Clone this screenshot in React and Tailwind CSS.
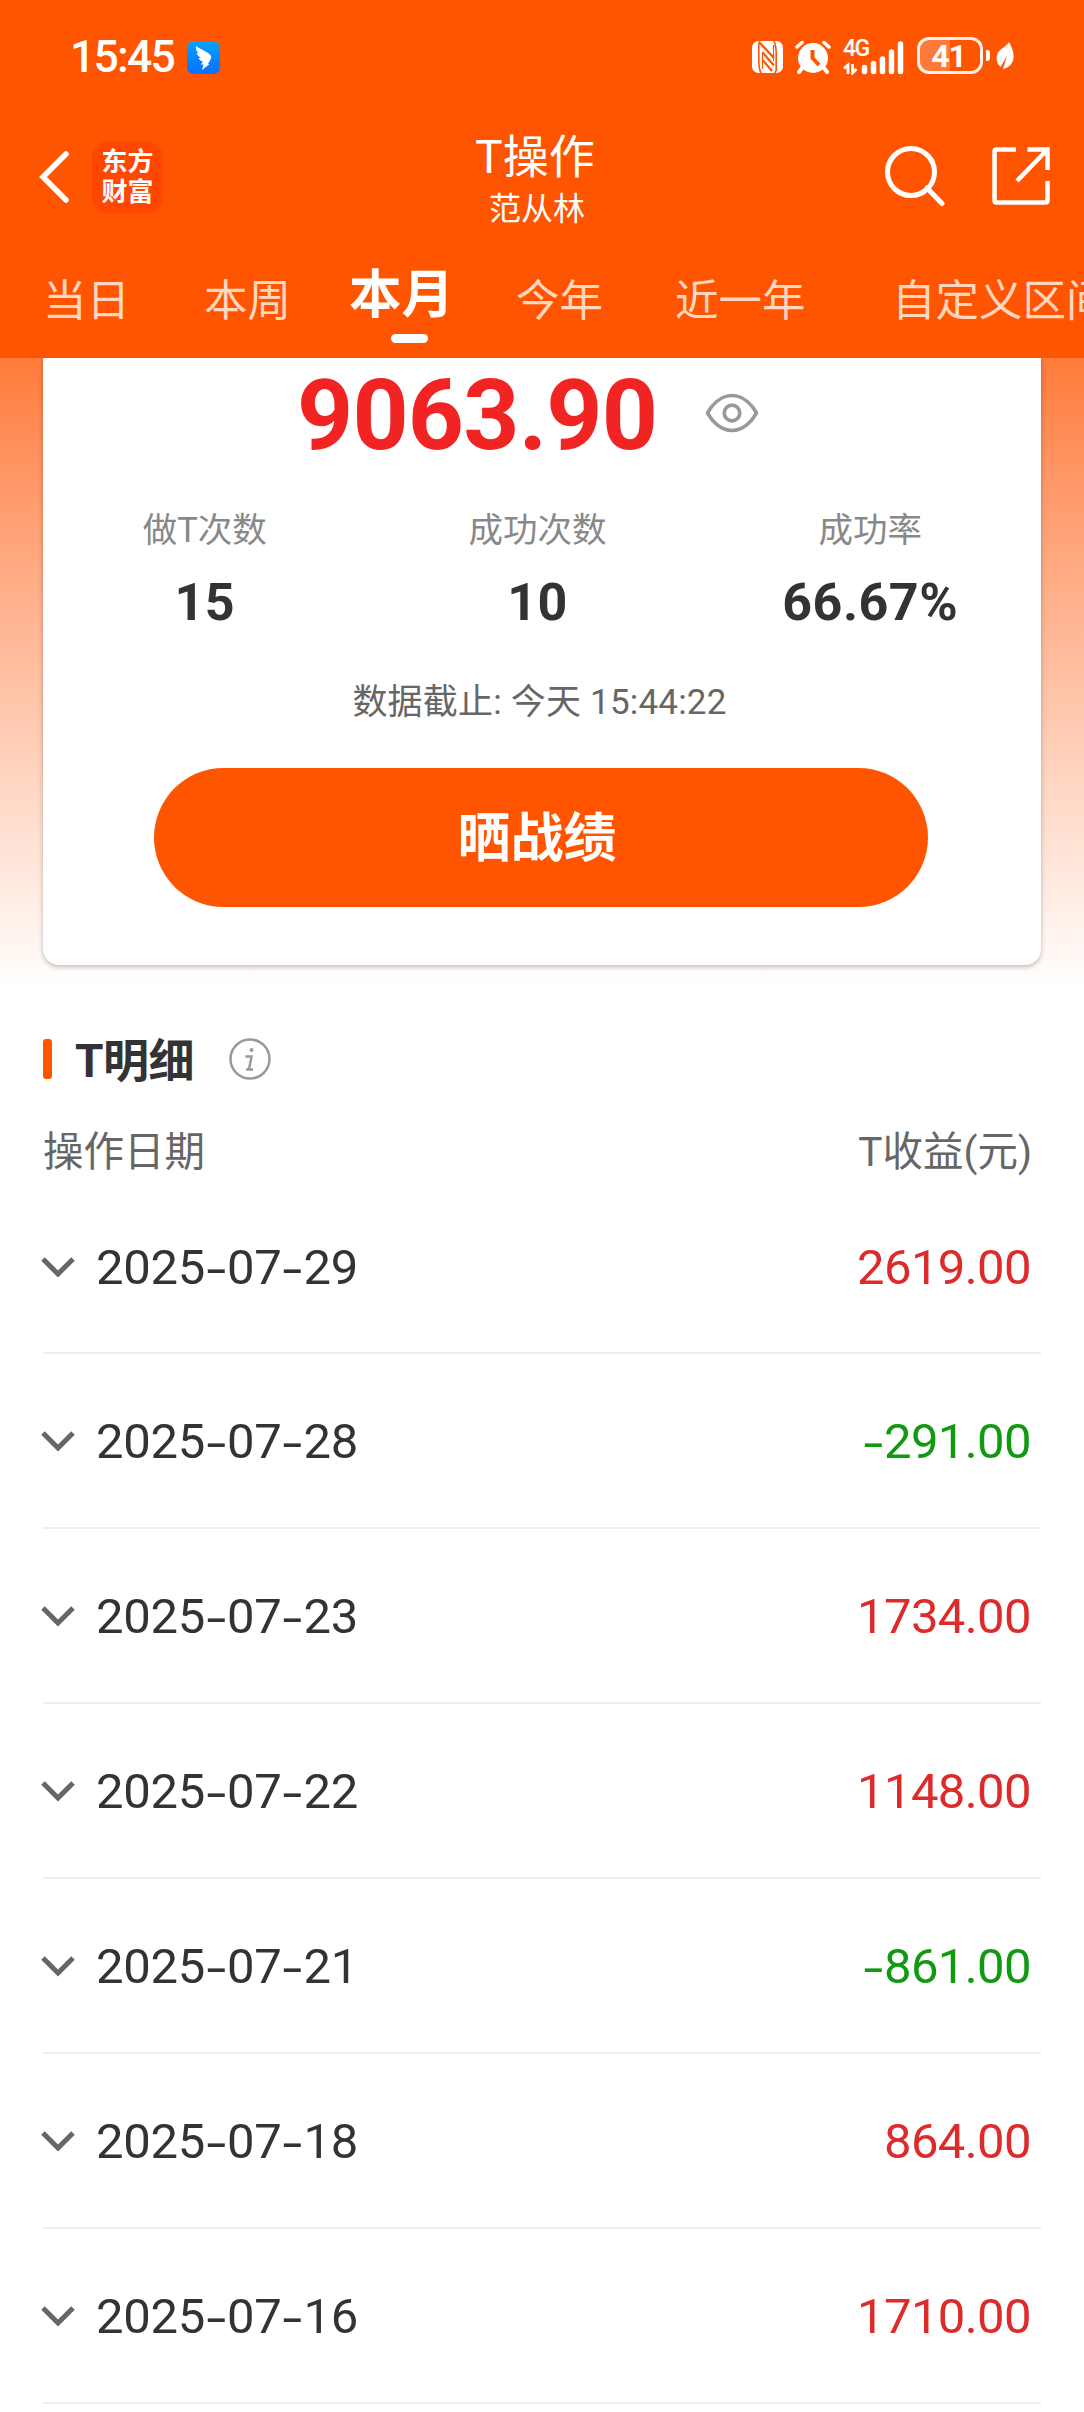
import { clsx } from 'clsx'

const tabs = [
  { label: '当日', width: 'w-[161px]' },
  { label: '本周', width: 'w-[145px]' },
  { label: '本月', width: 'w-[167px]', active: true },
  { label: '今年', width: 'w-[159px]' },
  { label: '近一年', width: 'w-[217px]' },
  { label: '自定义区间', width: 'w-[220px]' }
]

const stats = [
  { label: '做T次数', value: '15' },
  { label: '成功次数', value: '10' },
  { label: '成功率', value: '66.67%' }
]

const records = [
  { date: '2025-07-29', profit: '2619.00' },
  { date: '2025-07-28', profit: '-291.00' },
  { date: '2025-07-23', profit: '1734.00' },
  { date: '2025-07-22', profit: '1148.00' },
  { date: '2025-07-21', profit: '-861.00' },
  { date: '2025-07-18', profit: '864.00' },
  { date: '2025-07-16', profit: '1710.00' }
]

// Digits with wide dashes
function Digits({ text }) {
  return text.split(/(-)/).map((part, i) =>
    part === '-' ? (
      <span key={i} className="inline-block w-[22px] translate-y-[2px] scale-x-[1.45] text-center">-</span>
    ) : (
      <span key={i}>{part}</span>
    )
  )
}

function NfcIcon() {
  return (
    <svg className="w-[31px] h-[32px]" viewBox="0 0 31 32" fill="none">
      <rect width="31" height="32" rx="6.500" fill="#fff" />
      <path d="M9 32C6.500 28 6.800 20 6.800 16V3L8 0M22 0C24.500 5 24.200 12 24.200 16V29L23 32" stroke="#ff5500" strokeWidth="1.600" />
      <path d="M8 2L22 17M10.500 11.500L22 24.500M10.500 19L20 30" stroke="#ff5500" strokeWidth="2.200" />
      <path d="M10.500 11V28M21.500 4V20" stroke="#ff5500" strokeWidth="1.200" />
    </svg>
  )
}

function AlarmIcon() {
  return (
    <svg className="w-[36px] h-[34px]" viewBox="0 0 36 34" fill="none" strokeLinecap="round">
      <circle cx="18" cy="18" r="15" fill="#fff" />
      <path d="M2 7L7 2.500M34 7L29 2.500" stroke="#fff" strokeWidth="3.500" />
      <path d="M7 28L4 32M29 28L32 32" stroke="#fff" strokeWidth="4" />
      <path d="M17.500 10V18L24 25" stroke="#ff5500" strokeWidth="4" strokeLinecap="butt" strokeLinejoin="round" />
    </svg>
  )
}

function SignalIcon() {
  return (
    <svg className="w-[62px] h-[36px]" viewBox="0 0 62 36" fill="none">
      <path d="M5 35V26L1 29.500M9.500 25V34L13.500 30" stroke="#fff" strokeWidth="2.800" />
      <path
        d="M21.500 28.500V32.500M30.500 24.500V32.500M39.500 20V32.500M48.500 13V32.500M57.500 5V32.500"
        stroke="#fff"
        strokeWidth="5.500"
        strokeLinecap="round"
      />
    </svg>
  )
}

function StatusBar() {
  return (
    <div className="flex h-[114px] items-center pl-[70px] pr-[70px]">
      <span className="w-[105px] whitespace-nowrap text-[44.500px] font-medium leading-none tracking-[-1.800px]">15:45</span>
      <svg className="ml-[12px] w-[33px] h-[33px]" viewBox="0 0 33 33">
        <defs>
          <linearGradient id="wing" x1="0" y1="0" x2="0" y2="1">
            <stop offset="0" stopColor="#0aa2ff" />
            <stop offset="1" stopColor="#0470ff" />
          </linearGradient>
        </defs>
        <rect width="33" height="33" rx="7" fill="url(#wing)" />
        <path d="M9 5C12 7.500 20 10.500 23 13.500C24.500 15 24.500 17 23.500 18.500L21 23H22.500L15 29L16.500 23.500H14L16 20.500C13.500 20 12 18.500 11.500 17L14 17C11.500 15.500 10 13.500 9.500 12L12 12.500C9.500 10.500 8.500 8 9 5Z" fill="#fff" />
      </svg>

      <div className="ml-auto flex items-center">
        <NfcIcon />
        <span className="ml-[12px]"><AlarmIcon /></span>
        <div className="relative ml-[12px]">
          <SignalIcon />
          <span className="absolute left-0 top-[-2px] text-[23px] font-medium leading-none tracking-[-1.500px]">4G</span>
        </div>
        {/* Battery */}
        <div className="ml-[12px] mb-[3px] flex h-[37px] w-[66px] items-center justify-center rounded-[12px] border-[3px] border-white/90 bg-linear-to-r from-[#ff7a3a] from-50% to-transparent to-50% pr-[3px] text-[32px] font-bold leading-none tracking-[-1px]">
          41
        </div>
        <div className="ml-[3px] mb-[3px] h-[11px] w-[4px] rounded-r-[3px] bg-white" />
        <svg className="ml-[6px] mb-[3px] w-[18px] h-[30px]" viewBox="0 0 18 30">
          <path d="M13 1C16 7 18 11 17.500 17C17 23 12 27 7 28L11 15L4.500 26C0 22-.5 16 2.500 11C5 7 10 6 13 1Z" fill="#fff" />
        </svg>
      </div>
    </div>
  )
}

function NavBar() {
  return (
    <div className="flex h-[126px] items-center pl-[38px] pr-[33px]">
      <div className="flex w-[361px] items-center">
        <svg className="w-[31px] h-[54px]" viewBox="0 0 31 54" fill="none">
          <path d="M28 4L5 27L28 50" stroke="#fff" strokeWidth="5.500" strokeLinecap="round" />
        </svg>
        <div className="ml-[23px] flex h-[71px] w-[71px] flex-col items-center justify-center rounded-[15px] bg-[#ff4700] text-[26px] font-bold leading-[30px]">
          <span>东方</span>
          <span>财富</span>
        </div>
      </div>
      <div className="flex w-[276px] flex-col items-center pt-[6px]">
        <h1 className="text-[46px] leading-[57px] mr-[4px]">T操作</h1>
        <p className="text-[32px] leading-[46px]">范从林</p>
      </div>
      <div className="ml-auto mb-[2px] flex items-center">
        <svg className="w-[62px] h-[62px]" viewBox="0 0 62 62" fill="none" stroke="#fff" strokeWidth="5" strokeLinecap="round">
          <circle cx="27" cy="27" r="23.500" />
          <path d="M43 43L58 58.500" />
        </svg>
        <svg className="ml-[45px] w-[60px] h-[60px]" viewBox="0 0 60 60" fill="none" stroke="#fff" strokeWidth="4.500">
          <path d="M25 3.500H5.500Q3.500 3.500 3.500 5.500V54.500Q3.500 56.500 5.500 56.500H54.500Q56.500 56.500 56.500 54.500V35" />
          <path d="M36.500 3.500H56.500V24M56 4L26 35" />
        </svg>
      </div>
    </div>
  )
}

function Header() {
  return (
    <header className="h-[358px] overflow-hidden bg-[#ff5500] text-white">
      <StatusBar />
      <NavBar />
      <nav className="flex w-[1200px] pl-[43px]">
        {tabs.map((tab) => (
          <div key={tab.label} className={clsx('h-[118px] shrink-0', tab.width)}>
            <div
              className={clsx(
                tab.active
                  ? 'text-[52.500px] font-bold leading-[60px] pt-[25px]'
                  : 'text-[43.500px] leading-[60px] pt-[32px] text-[#ffd6c0]'
              )}
            >
              {tab.label}
            </div>
            {tab.active && <div className="ml-[42px] mt-[9px] h-[9px] w-[37px] rounded-full bg-white" />}
          </div>
        ))}
      </nav>
    </header>
  )
}

function SummaryCard() {
  return (
    <section className="h-[632px] bg-linear-to-b from-[#ff7b39] to-white px-[43px]">
      <div className="flex h-[607px] flex-col items-center rounded-b-[16px] bg-white shadow-[0_2px_5px_rgba(0,0,0,0.25)]">
        <div className="flex w-full items-center pl-[254px] pt-[8px]">
          <span className="text-[98px] font-bold leading-[100px] tracking-[-0.8px] text-[#f22323]">9063.90</span>
          <svg className="ml-auto mb-[7px] mr-[282px] w-[54px] h-[40px]" viewBox="0 0 54 40" fill="none" stroke="#999" strokeWidth="3.700">
            <path d="M2.500 20C6.500 13 15 2.500 27 2.500S47.500 13 51.500 20C47.500 27 39 37.500 27 37.500S6.500 27 2.500 20Z" strokeLinejoin="round" />
            <circle cx="27" cy="20" r="7.800" />
          </svg>
        </div>

        <div className="mt-[39px] flex w-full">
          {stats.map((stat) => (
            <div key={stat.label} className="flex-1 pr-[9px] text-center">
              <div className="text-[34.500px] leading-[50px] text-[#888]">{stat.label}</div>
              <div className="mt-[20px] text-[52px] font-bold leading-[56px] tracking-[0.5px] text-[#333]">{stat.value}</div>
            </div>
          ))}
        </div>

        <p className="mt-[47px] mr-[5px] text-[35px] leading-[50px] tracking-[0.2px] text-[#666]">数据截止: 今天 15:44:22</p>

        <button className="mt-[40px] mr-[2px] h-[139px] w-[774px] rounded-full bg-[#ff5500] pr-[8px] pt-[5px] text-[53px] font-bold text-white">
          晒战绩
        </button>
      </div>
    </section>
  )
}

function DetailList() {
  return (
    <section className="px-[43px]">
      <div className="flex h-[60px] mt-[39px] items-center">
        <div className="h-[40px] w-[9px] rounded-[3px] bg-[#ff5500]" />
        <h2 className="ml-[23px] w-[120px] whitespace-nowrap pt-[3px] text-[46px] font-bold leading-[60px] tracking-[-0.5px] text-[#333]">T明细</h2>
        <svg className="ml-[34px] w-[42px] h-[42px]" viewBox="0 0 42 42" fill="none" stroke="#999">
          <circle cx="21" cy="21" r="19.500" strokeWidth="2.500" />
          <circle cx="22.500" cy="12" r="2" fill="#999" stroke="none" />
          <path d="M16.500 18.500H22.500L20 31.500M17 31.500H24" strokeWidth="2.500" />
        </svg>
      </div>

      <div className="mt-[32px] flex h-[60px] items-center justify-between pr-[9px] pt-[3px] text-[40.500px] text-[#666]">
        <span>操作日期</span>
        <span>T收益(元)</span>
      </div>

      <ul>
        {records.map((record, i) => (
          <li
            key={record.date}
            className={clsx(
              'flex items-center border-b-2 border-[#eee] pr-[10px] text-[49px] leading-[60px]',
              i === 0 ? 'h-[173px]' : 'h-[175px]'
            )}
          >
            <svg className="ml-[-2px] w-[34px] h-[22px]" viewBox="0 0 34 22" fill="none">
              <path d="M2 3L17 18L32 3" stroke="#666" strokeWidth="5" />
            </svg>
            <span className="ml-[21px] pt-[2px] tracking-[-0.3px] text-[#333]"><Digits text={record.date} /></span>
            <span
              className={clsx(
                'ml-auto pt-[2px] tracking-[-0.6px]',
                record.profit.startsWith('-') ? 'text-[#119911]' : 'text-[#dd2a2a]'
              )}
            >
              <Digits text={record.profit} />
            </span>
          </li>
        ))}
      </ul>
    </section>
  )
}

export default function App() {
  return (
    <div className="h-[2412px] w-full overflow-hidden bg-white font-['Roboto','Noto_Sans_CJK_SC',sans-serif]">
      <Header />
      <SummaryCard />
      <DetailList />
    </div>
  )
}
